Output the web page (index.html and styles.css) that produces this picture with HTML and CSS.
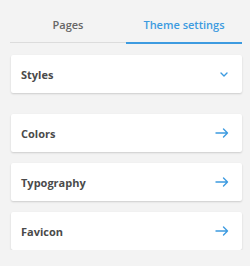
FILE: index.html
```html
<!DOCTYPE html>
<html>
  <head>
    <meta charset="utf-8">
    <title>Theme settings</title>
    <link rel="stylesheet" href="styles.css">
  </head>
  <body>
    <div class="panel">
      <div class="tabs">
        <a class="tab">Pages</a>
        <a class="tab tab--active">Theme settings</a>
      </div>

      <div class="card card--open">
        <span class="card__title">Styles</span>
        <svg class="card__icon card__icon--chevron" viewBox="0 0 8 5">
          <path d="M1,1 L4,4 L7,1" />
        </svg>
      </div>

      <div class="list">
        <div class="card">
          <span class="card__title">Colors</span>
          <svg class="card__icon card__icon--arrow" viewBox="0 0 14 10">
            <path d="M1,5 L12.5,5 M8.5,1 L12.5,5 L8.5,9" />
          </svg>
        </div>
        <div class="card">
          <span class="card__title">Typography</span>
          <svg class="card__icon card__icon--arrow" viewBox="0 0 14 10">
            <path d="M1,5 L12.5,5 M8.5,1 L12.5,5 L8.5,9" />
          </svg>
        </div>
        <div class="card">
          <span class="card__title">Favicon</span>
          <svg class="card__icon card__icon--arrow" viewBox="0 0 14 10">
            <path d="M1,5 L12.5,5 M8.5,1 L12.5,5 L8.5,9" />
          </svg>
        </div>
      </div>
    </div>
  </body>
</html>
```

FILE: styles.css
```css
body {
  margin: 0;
  background: #f3f3f3;
  font-family: 'Open Sans', sans-serif;
  color: #4a4a4a;
}
.panel {
  padding: 0 8px 0 10px;
}
.tabs {
  display: flex;
  padding-top: 16px;
}
.tab {
  flex: 1;
  text-align: center;
  font-size: 11px;
  font-weight: 600;
  line-height: 17px;
  padding-bottom: 9px;
  color: #666;
  border-bottom: 1px solid #dcdcdc;
  margin-bottom: 1px;
}
.tab--active {
  color: #3d9be0;
  border-bottom: 2px solid #3d9be0;
  margin-bottom: 0;
}
.card {
  display: flex;
  align-items: center;
  justify-content: space-between;
  height: 38px;
  margin-left: 1px;
  padding: 0 13px 0 10px;
  background: #fff;
  border-radius: 2px;
  box-shadow: 0 1px 2px rgba(0, 0, 0, 0.16);
}
.card--open {
  margin-top: 11px;
  padding-right: 14px;
}
.list {
  display: flex;
  flex-direction: column;
  gap: 11px;
  margin-top: 21px;
}
.card__title {
  font-size: 11px;
  font-weight: 700;
  color: #4a4a4a;
}
.card__icon {
  display: block;
  fill: none;
  stroke: #3d9be0;
  stroke-width: 1.4;
  stroke-linecap: round;
  stroke-linejoin: round;
}
.card__icon--chevron {
  width: 8px;
  height: 5px;
}
.card__icon--arrow {
  width: 14px;
  height: 10px;
}
```
